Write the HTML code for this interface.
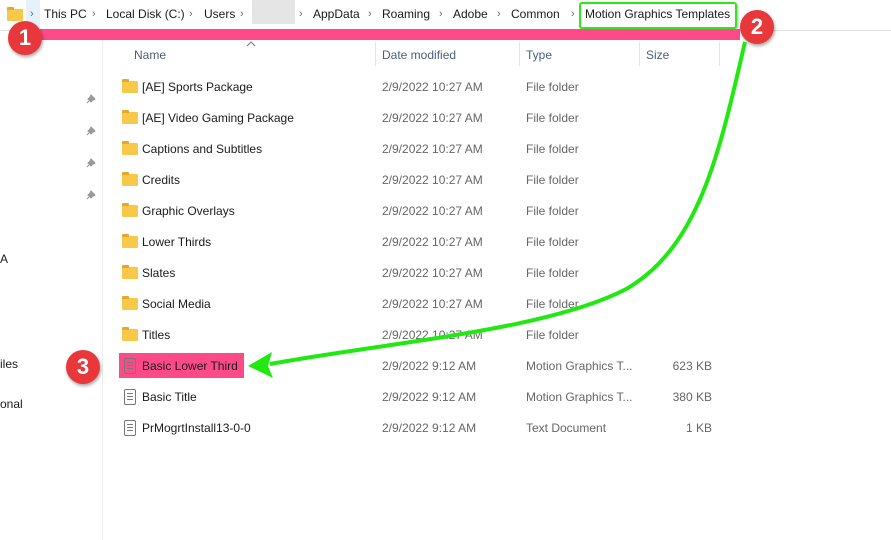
<!DOCTYPE html><html><head><style>
body{margin:0;width:891px;height:540px;background:#fff;font-family:"Liberation Sans",sans-serif;position:relative;overflow:hidden;color:#1a1a1a}
.a{position:absolute;white-space:nowrap}
.bc{font-size:12px;top:7px}
.sep{font-size:11px;color:#666;top:8px}
.row{position:absolute;left:104px;width:620px;height:31px;font-size:12px}
.row span{position:absolute;top:9px}
.d{left:278px;color:#666}.t{left:422px;color:#666}.s{right:12px;color:#666;text-align:right}
.fold{position:absolute;left:18px;top:10px;width:16px;height:12px;background:#f8c84a;border-radius:1px}
.fold:before{content:"";position:absolute;left:0;top:-2px;width:7px;height:3px;background:#e6a925;border-radius:1px 1px 0 0}
.doc{position:absolute;left:20px;top:8px;width:10px;height:14px;border:1px solid #777;border-radius:2px;background:#fff}
.doc:before{content:"";position:absolute;left:2px;top:3px;width:6px;height:5px;border-top:1px solid #777;border-bottom:1px solid #777}
.doc:after{content:"";position:absolute;left:2px;top:6px;width:6px;height:1px;background:#777}
.circ{position:absolute;width:34px;height:34px;border-radius:50%;background:#e8383b;color:#fff;font-weight:bold;font-size:22px;text-align:center;line-height:34px;box-shadow:1px 2px 3px rgba(0,0,0,.35)}
.pin{position:absolute;left:86px}
</style></head><body>
<div class="a" style="left:0;top:30px;width:891px;height:1px;background:#e0e0e0"></div>
<div class="a" style="left:102px;top:40px;width:1px;height:500px;background:#eee"></div>
<div class="a" style="left:26px;top:0;width:14px;height:30px;background:#e5f1fb"></div>
<div class="fold" style="left:7px;top:9px"></div>
<span class="a sep" style="left:30px">›</span>
<span class="a bc" style="left:44px">This PC</span><span class="a sep" style="left:92px">›</span>
<span class="a bc" style="left:106px">Local Disk (C:)</span><span class="a sep" style="left:189px">›</span>
<span class="a bc" style="left:204px">Users</span><span class="a sep" style="left:240px">›</span>
<div class="a" style="left:252px;top:0;width:43px;height:24px;background:#e5e5e5"></div>
<span class="a sep" style="left:299px">›</span>
<span class="a bc" style="left:313px">AppData</span><span class="a sep" style="left:368px">›</span>
<span class="a bc" style="left:382px">Roaming</span><span class="a sep" style="left:439px">›</span>
<span class="a bc" style="left:453px">Adobe</span><span class="a sep" style="left:497px">›</span>
<span class="a bc" style="left:511px">Common</span><span class="a sep" style="left:571px">›</span>
<div class="a" style="left:579px;top:2px;width:154px;height:23px;border:2px solid #2ee81a;border-radius:3px;box-shadow:1px 1px 2px rgba(0,0,0,.3)"></div>
<span class="a bc" style="left:585px">Motion Graphics Templates</span>
<div class="a" style="left:40px;top:29px;width:700px;height:11px;background:#ff4a8a"></div>
<div class="circ" style="left:8px;top:21px">1</div>
<div class="circ" style="left:740px;top:10px">2</div>
<div class="circ" style="left:66px;top:350px">3</div>
<svg class="a" style="left:246px;top:41px" width="10" height="6"><path d="M1,5 L5,1 L9,5" fill="none" stroke="#777" stroke-width="1"/></svg>
<span class="a" style="left:134px;top:48px;font-size:12px;color:#4c607a">Name</span>
<div class="a" style="left:375px;top:42px;width:1px;height:24px;background:#e5e5e5"></div>
<span class="a" style="left:382px;top:48px;font-size:12px;color:#4c607a">Date modified</span>
<div class="a" style="left:519px;top:42px;width:1px;height:24px;background:#e5e5e5"></div>
<span class="a" style="left:526px;top:48px;font-size:12px;color:#4c607a">Type</span>
<div class="a" style="left:639px;top:42px;width:1px;height:24px;background:#e5e5e5"></div>
<span class="a" style="left:646px;top:48px;font-size:12px;color:#4c607a">Size</span>
<div class="a" style="left:719px;top:42px;width:1px;height:24px;background:#e5e5e5"></div>
<svg class="pin" style="top:94px" width="10" height="10"><path d="M5,1 L9,5 L7,6 L5,8 L2,5 L4,3 Z M3,7 L1,9" fill="#999" stroke="#999"/></svg>
<svg class="pin" style="top:126px" width="10" height="10"><path d="M5,1 L9,5 L7,6 L5,8 L2,5 L4,3 Z M3,7 L1,9" fill="#999" stroke="#999"/></svg>
<svg class="pin" style="top:158px" width="10" height="10"><path d="M5,1 L9,5 L7,6 L5,8 L2,5 L4,3 Z M3,7 L1,9" fill="#999" stroke="#999"/></svg>
<svg class="pin" style="top:190px" width="10" height="10"><path d="M5,1 L9,5 L7,6 L5,8 L2,5 L4,3 Z M3,7 L1,9" fill="#999" stroke="#999"/></svg>
<span class="a" style="left:0;top:252px;font-size:12px">A</span>
<span class="a" style="left:0;top:357px;font-size:12px">iles</span>
<span class="a" style="left:0;top:397px;font-size:12px">onal</span>
<div class="row" style="top:71px"><div class="fold"></div><span style="left:38px">[AE] Sports Package</span><span class="d">2/9/2022 10:27 AM</span><span class="t">File folder</span></div>
<div class="row" style="top:102px"><div class="fold"></div><span style="left:38px">[AE] Video Gaming Package</span><span class="d">2/9/2022 10:27 AM</span><span class="t">File folder</span></div>
<div class="row" style="top:133px"><div class="fold"></div><span style="left:38px">Captions and Subtitles</span><span class="d">2/9/2022 10:27 AM</span><span class="t">File folder</span></div>
<div class="row" style="top:164px"><div class="fold"></div><span style="left:38px">Credits</span><span class="d">2/9/2022 10:27 AM</span><span class="t">File folder</span></div>
<div class="row" style="top:195px"><div class="fold"></div><span style="left:38px">Graphic Overlays</span><span class="d">2/9/2022 10:27 AM</span><span class="t">File folder</span></div>
<div class="row" style="top:226px"><div class="fold"></div><span style="left:38px">Lower Thirds</span><span class="d">2/9/2022 10:27 AM</span><span class="t">File folder</span></div>
<div class="row" style="top:257px"><div class="fold"></div><span style="left:38px">Slates</span><span class="d">2/9/2022 10:27 AM</span><span class="t">File folder</span></div>
<div class="row" style="top:288px"><div class="fold"></div><span style="left:38px">Social Media</span><span class="d">2/9/2022 10:27 AM</span><span class="t">File folder</span></div>
<div class="row" style="top:319px"><div class="fold"></div><span style="left:38px">Titles</span><span class="d">2/9/2022 10:27 AM</span><span class="t">File folder</span></div>
<div class="a" style="left:119px;top:353px;width:125px;height:25px;background:#ff4a8a"></div>
<div class="row" style="top:350px"><div class="doc" style="background:transparent"></div><span style="left:38px">Basic Lower Third</span><span class="d">2/9/2022 9:12 AM</span><span class="t">Motion Graphics T...</span><span class="s">623 KB</span></div>
<div class="row" style="top:381px"><div class="doc"></div><span style="left:38px">Basic Title</span><span class="d">2/9/2022 9:12 AM</span><span class="t">Motion Graphics T...</span><span class="s">380 KB</span></div>
<div class="row" style="top:412px"><div class="doc"></div><span style="left:38px">PrMogrtInstall13-0-0</span><span class="d">2/9/2022 9:12 AM</span><span class="t">Text Document</span><span class="s">1 KB</span></div>
<svg class="a" style="left:0;top:0" width="891" height="540"><path d="M745,42 C720,150 700,245 628,288 C550,330 390,342 270,364" fill="none" stroke="#22e812" stroke-width="4"/><polygon points="248,366 272,352 268,366 273,378" fill="#22e812"/></svg>
</body></html>
